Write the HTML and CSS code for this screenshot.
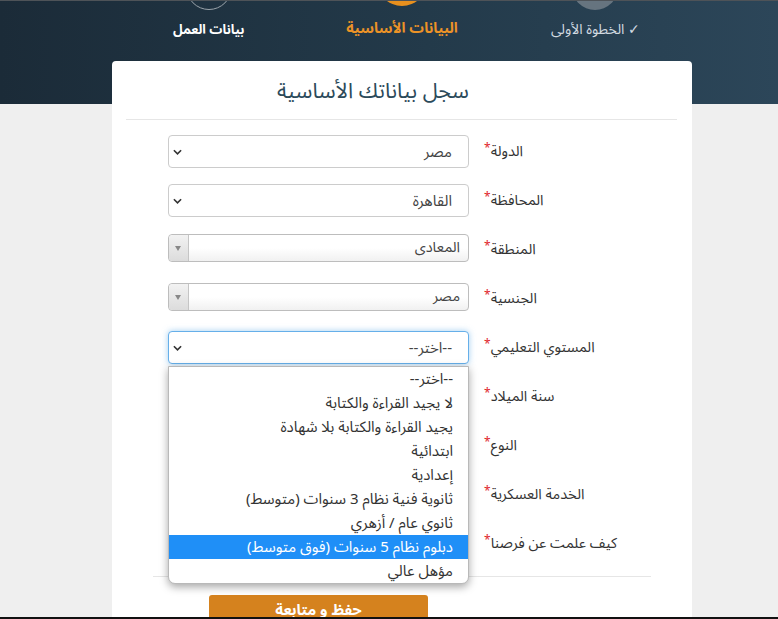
FILE: index.html
```html
<!DOCTYPE html>
<html lang="ar" dir="rtl">
<head>
<meta charset="utf-8">
<title>سجل بياناتك الأساسية</title>
<link rel="stylesheet" href="styles.css">
</head>
<body>
<header class="hero">
  <div class="steps">
    <div class="step step-done">
      <span class="circle"></span>
      <span class="step-label">&#10003; الخطوة الأولى</span>
    </div>
    <div class="step step-active">
      <span class="circle"></span>
      <span class="step-label">البيانات الأساسية</span>
    </div>
    <div class="step step-next">
      <span class="circle"></span>
      <span class="step-label">بيانات العمل</span>
    </div>
  </div>
</header>

<main class="card">
  <h1 class="title">سجل بياناتك الأساسية</h1>
  <hr class="sep">
  <form class="form">
    <div class="row">
      <label class="lbl">الدولة<i>*</i></label>
      <div class="sel"><span>مصر</span><svg class="chev" viewBox="0 0 10 6"><path d="M1 1l4 4 4-4"/></svg></div>
    </div>
    <div class="row">
      <label class="lbl">المحافظة<i>*</i></label>
      <div class="sel"><span>القاهرة</span><svg class="chev" viewBox="0 0 10 6"><path d="M1 1l4 4 4-4"/></svg></div>
    </div>
    <div class="row">
      <label class="lbl">المنطقة<i>*</i></label>
      <div class="sel2"><span class="sel2-text">المعادى</span><span class="sel2-arrow"></span></div>
    </div>
    <div class="row">
      <label class="lbl">الجنسية<i>*</i></label>
      <div class="sel2"><span class="sel2-text">مصر</span><span class="sel2-arrow"></span></div>
    </div>
    <div class="row">
      <label class="lbl">المستوي التعليمي<i>*</i></label>
      <div class="sel sel-focus"><span>--اختر--</span><svg class="chev" viewBox="0 0 10 6"><path d="M1 1l4 4 4-4"/></svg>
        <ul class="dropdown">
          <li>--اختر--</li>
          <li>لا يجيد القراءة والكتابة</li>
          <li>يجيد القراءة والكتابة بلا شهادة</li>
          <li>ابتدائية</li>
          <li>إعدادية</li>
          <li>ثانوية فنية نظام 3 سنوات (متوسط)</li>
          <li>ثانوي عام / أزهري</li>
          <li class="hl">دبلوم نظام 5 سنوات (فوق متوسط)</li>
          <li>مؤهل عالي</li>
        </ul>
      </div>
    </div>
    <div class="row">
      <label class="lbl">سنة الميلاد<i>*</i></label>
      <div class="sel"></div>
    </div>
    <div class="row">
      <label class="lbl">النوع<i>*</i></label>
      <div class="sel"></div>
    </div>
    <div class="row">
      <label class="lbl">الخدمة العسكرية<i>*</i></label>
      <div class="sel"></div>
    </div>
    <div class="row">
      <label class="lbl">كيف علمت عن فرصنا<i>*</i></label>
      <div class="sel"></div>
    </div>
    <hr class="sep2">
    <div class="actions">
      <button type="button" class="btn">حفظ و متابعة</button>
    </div>
  </form>
</main>
<div class="bottom-edge"></div>
</body>
</html>
```
FILE: styles.css
```css
* { box-sizing: border-box; }
html, body { margin: 0; padding: 0; }
body {
  background: #efefef;
  font-family: "Noto Sans Arabic", "DejaVu Sans", sans-serif;
  color: #333;
  overflow: hidden;
  height: 619px;
}
.hero {
  height: 104px;
  background: linear-gradient(90deg, #1b2b38 0%, #233a4a 55%, #2c4659 100%);
  border-top: 1px solid #4e5358;
  overflow: hidden;
}
.steps {
  width: 580px;
  margin-right: 86px;
  display: flex;
}
.step {
  flex: 1;
  display: flex;
  flex-direction: column;
  align-items: center;
}
.circle {
  display: block;
  border-radius: 50%;
}
.step-done .circle {
  width: 46px; height: 46px;
  margin-top: -37px;
  background: #66747f;
}
.step-active .circle {
  width: 50px; height: 50px;
  margin-top: -45px;
  background: #e8901e;
}
.step-next .circle {
  width: 46px; height: 46px;
  margin-top: -37px;
  border: 1.5px solid #9aa3aa;
}
.step-label {
  display: block;
  font-weight: bold;
  white-space: nowrap;
}
.step-done .step-label {
  margin-top: 11px;
  font-size: 14px;
  line-height: 18px;
  color: #d3dbe1;
  font-weight: normal;
}
.step-active .step-label {
  margin-top: 13px;
  font-size: 14.5px;
  line-height: 20px;
  color: #ec9327;
}
.step-next .step-label {
  margin-top: 11px;
  font-size: 13px;
  line-height: 18px;
  color: #ffffff;
}
.card {
  position: relative;
  width: 580px;
  margin: -43px 86px 0 0;
  background: #fff;
  border-radius: 4px;
  padding: 14px 0 40px;
  min-height: 600px;
}
.title {
  margin: 0 0 12px;
  padding-right: 58px;
  text-align: center;
  font-size: 21.5px;
  line-height: 32px;
  font-weight: normal;
  color: #2b4a5a;
}
.sep {
  margin: 0 15px 0 14px;
  border: 0;
  border-top: 1px solid #e6e6e6;
}
.form {
  padding: 15px 0 0 56px;
}
.row {
  display: flex;
  align-items: center;
  height: 33px;
  margin-bottom: 16px;
}
.lbl {
  flex: 1;
  text-align: left;
  padding-left: 15px;
  font-size: 14.5px;
  color: #333;
  white-space: nowrap;
}
.lbl i {
  font-style: normal;
  color: #e0252b;
  font-size: 12px;
  vertical-align: top;
}
.sel {
  position: relative;
  width: 301px;
  height: 33px;
  border: 1px solid #cccccc;
  border-radius: 4px;
  background: #fff;
  padding: 0 16px 0 0;
  display: flex;
  align-items: center;
  font-size: 15px;
  color: #444;
}
.sel span { flex: 1; }
.chev {
  width: 9px;
  height: 6px;
  margin-left: 4px;
  fill: none;
  stroke: #333;
  stroke-width: 1.8;
}
.sel-focus {
  border-color: #66afe9;
  box-shadow: 0 0 6px rgba(102, 175, 233, .6);
}
.dropdown {
  position: absolute;
  top: 34px;
  left: -1px;
  width: 301px;
  margin: 0;
  padding: 0;
  list-style: none;
  background: #fff;
  border: 1px solid #b9b9b9;
  border-radius: 0 0 7px 7px;
  box-shadow: 0 3px 9px rgba(0, 0, 0, .35);
  overflow: hidden;
  z-index: 5;
}
.dropdown li {
  height: 24px;
  line-height: 24px;
  padding-right: 15px;
  font-size: 15px;
  color: #333;
  white-space: nowrap;
}
.dropdown li.hl {
  background: #1f8ff7;
  color: #fff;
}
.sel2 {
  width: 301px;
  height: 28px;
  align-self: flex-start;
  margin-top: 1px;
  border: 1px solid #bdbdbd;
  border-radius: 4px;
  background: linear-gradient(#ffffff 50%, #f1f1f1);
  display: flex;
  font-size: 14.5px;
  color: #444;
}
.sel2-text {
  flex: 1;
  padding-right: 8px;
  line-height: 25px;
}
.sel2-arrow {
  width: 20px;
  border-right: 1px solid #c5c5c5;
  border-radius: 4px 0 0 4px;
  background: linear-gradient(#f2f2f2, #dcdcdc);
  position: relative;
}
.sel2-arrow::after {
  content: "";
  position: absolute;
  left: 6px;
  top: 11px;
  border-left: 3.5px solid transparent;
  border-right: 3.5px solid transparent;
  border-top: 5px solid #888;
}
.sep2 {
  margin: 0 41px 0 0;
  width: 498px;
  border: 0;
  border-top: 1px solid #e6e6e6;
}
.actions {
  padding: 18px 264px 0 0;
}
.btn {
  display: block;
  width: 219px;
  height: 38px;
  padding: 0 0 8px;
  border: 0;
  border-radius: 3px;
  background: #d5821e;
  color: #fff;
  font-family: inherit;
  font-size: 15px;
  font-weight: bold;
  line-height: 20px;
}
.bottom-edge {
  position: fixed;
  left: 0;
  right: 0;
  bottom: 0;
  height: 2px;
  background: #111;
}
```
